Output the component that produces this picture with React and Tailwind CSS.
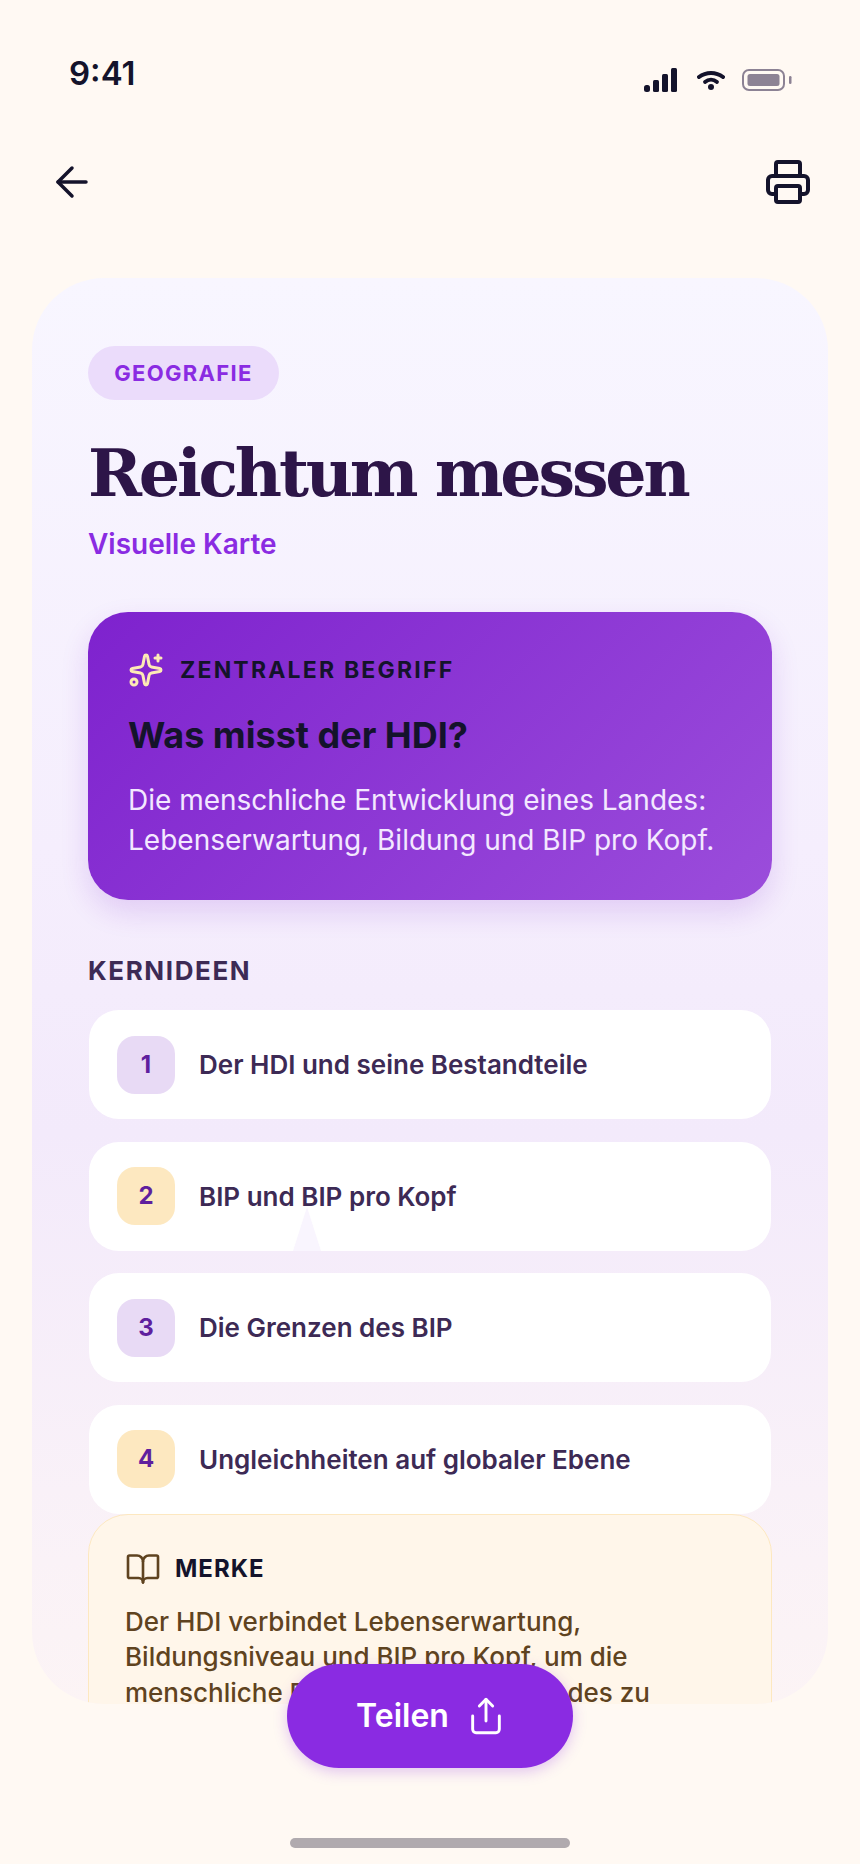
import React from "react";
import { ArrowLeft, Printer, Sparkles, BookOpen, Share } from "lucide-react";

const items = [
  { n: "1", t: "Der HDI und seine Bestandteile", bg: "bg-[#e8daf5]" },
  { n: "2", t: "BIP und BIP pro Kopf", bg: "bg-[#fde8c0]", peak: true },
  { n: "3", t: "Die Grenzen des BIP", bg: "bg-[#e8daf5]" },
  { n: "4", t: "Ungleichheiten auf globaler Ebene", bg: "bg-[#fde8c0]" },
];

export default function App() {
  return (
    <div className="relative flex h-[1864px] w-[860px] flex-col overflow-hidden bg-[#fff9f3] font-['Inter',sans-serif]">
      <div className="flex h-[116px] shrink-0 items-start justify-between pl-[69px] pr-[68px]">
        <span className="mt-[51px] text-[33px] leading-[44px] font-semibold text-[#14132b]">9:41</span>
        <div className="mt-[68px] flex items-center">
          <svg width="34" height="24" viewBox="0 0 34 24" fill="#14132b">
            <rect x="0" y="17" width="6" height="7" rx="2.5" />
            <rect x="9" y="12" width="6" height="12" rx="1.5" />
            <rect x="18" y="6" width="6" height="18" rx="1.5" />
            <rect x="27" y="0" width="6" height="24" rx="1.5" />
          </svg>
          <svg className="ml-[19px]" width="28" height="20" viewBox="0 0 28 20" fill="none" stroke="#14132b">
            <path d="M2 7C9 1.5 19 1.5 26 7" strokeWidth="4" strokeLinecap="round" />
            <path d="M8 12C11.5 9 16.5 9 20 12" strokeWidth="3.8" strokeLinecap="round" />
            <circle cx="14" cy="17" r="3" fill="#14132b" stroke="none" />
          </svg>
          <svg className="ml-[17px]" width="50" height="22" viewBox="0 0 50 22" fill="none">
            <rect x="1" y="1" width="41" height="20" rx="6" stroke="#8c8294" strokeWidth="2" />
            <rect x="5.5" y="5" width="32" height="12" rx="2.5" fill="#8c8294" />
            <rect x="47" y="7" width="2.5" height="8" rx="1.25" fill="#8c8294" />
          </svg>
        </div>
      </div>

      <div className="flex h-[162px] shrink-0 items-start justify-between pl-[48px] pr-[48px] pt-[42px] text-[#14132b]">
        <ArrowLeft size={48} strokeWidth={1.75} />
        <Printer size={48} strokeWidth={2} />
      </div>

      <div className="mx-[32px] h-[1426px] shrink-0 overflow-hidden rounded-[72px] bg-[linear-gradient(180deg,#f8f6ff_0%,#f5eefd_40%,#f3eafb_60%,#f9f1f8_85%,#fcf4f5_100%)] px-[56px] pt-[68px]">
        <span className="inline-flex h-[54px] w-[191px] items-center justify-center rounded-full bg-[#ebdcfb] text-[22px] font-bold tracking-[1.3px] text-[#8a2be2]">
          GEOGRAFIE
        </span>
        <h1 className="mt-[31px] font-['DejaVu_Serif',serif] text-[65px] leading-[84px] font-bold tracking-[-3.2px] text-[#2d1548]">
          Reichtum messen
        </h1>
        <p className="mt-[11px] text-[28px] leading-[36px] font-semibold text-[#8a2be2]">Visuelle Karte</p>

        <div className="mt-[50px] h-[288px] rounded-[40px] bg-[linear-gradient(135deg,#7e22ce_0%,#9b4ddb_100%)] px-[40px] pt-[40px] shadow-[0_12px_28px_rgba(126,34,206,0.16)]">
          <div className="flex items-center gap-[16px]">
            <Sparkles size={36} strokeWidth={2} className="text-[#fdeab5]" />
            <span className="text-[23px] font-bold tracking-[2.2px] text-[#14132b]">ZENTRALER BEGRIFF</span>
          </div>
          <h2 className="mt-[25px] text-[36px] leading-[44px] font-bold text-[#14132b]">Was misst der HDI?</h2>
          <p className="mt-[23px] text-[28px] leading-[40px] text-[#f3e8ff]">
            Die menschliche Entwicklung eines Landes: Lebenserwartung, Bildung und BIP pro Kopf.
          </p>
        </div>

        <h3 className="mt-[55px] text-[26px] leading-[32px] font-bold tracking-[1.6px] text-[#3d2a55]">KERNIDEEN</h3>

        <div className="mt-[23px] flex flex-col gap-[22.5px] px-[1px]">
          {items.map((it) => (
            <div key={it.n} className="relative flex h-[109px] items-center gap-[24px] rounded-[30px] bg-white pl-[28px]">
              <span className={`flex h-[58px] w-[58px] items-center justify-center rounded-[18px] text-[24px] font-bold text-[#5f1f9e] ${it.bg}`}>
                {it.n}
              </span>
              <span className="text-[26px] font-semibold text-[#3d2a55]">{it.t}</span>
              {it.peak && (
                <svg className="absolute bottom-0 left-[204px]" width="28" height="44" viewBox="0 0 28 44" fill="#f9f5fe">
                  <path d="M14 0L28 44H0Z" />
                </svg>
              )}
            </div>
          ))}
        </div>

        <div className="h-[300px] rounded-[40px] border border-[#fde8c0] bg-[#fff6ea] px-[36px] pt-[36px]">
          <div className="flex items-center gap-[14px]">
            <BookOpen size={36} strokeWidth={1.75} className="text-[#5f4320]" />
            <span className="text-[24px] font-bold tracking-[1px] text-[#14132b]">MERKE</span>
          </div>
          <p className="mt-[17px] text-[26px] leading-[35.5px] font-medium text-[#5f4320]">
            Der HDI verbindet Lebenserwartung, Bildungsniveau und BIP pro Kopf, um die menschliche Entwicklung eines Landes zu bewerten.
          </p>
        </div>
      </div>

      <button className="absolute top-[1664px] left-[287px] flex h-[104px] w-[286px] items-center justify-center gap-[17px] rounded-full bg-[#8a2be2] pl-[2px] text-[32px] font-semibold text-white shadow-[0_4px_14px_rgba(138,43,226,0.25)]">
        Teilen
        <Share size={40} strokeWidth={1.75} />
      </button>

      <div className="mx-auto mt-[134px] h-[10px] w-[280px] shrink-0 rounded-[5px] bg-[#b0aaae]" />
    </div>
  );
}
